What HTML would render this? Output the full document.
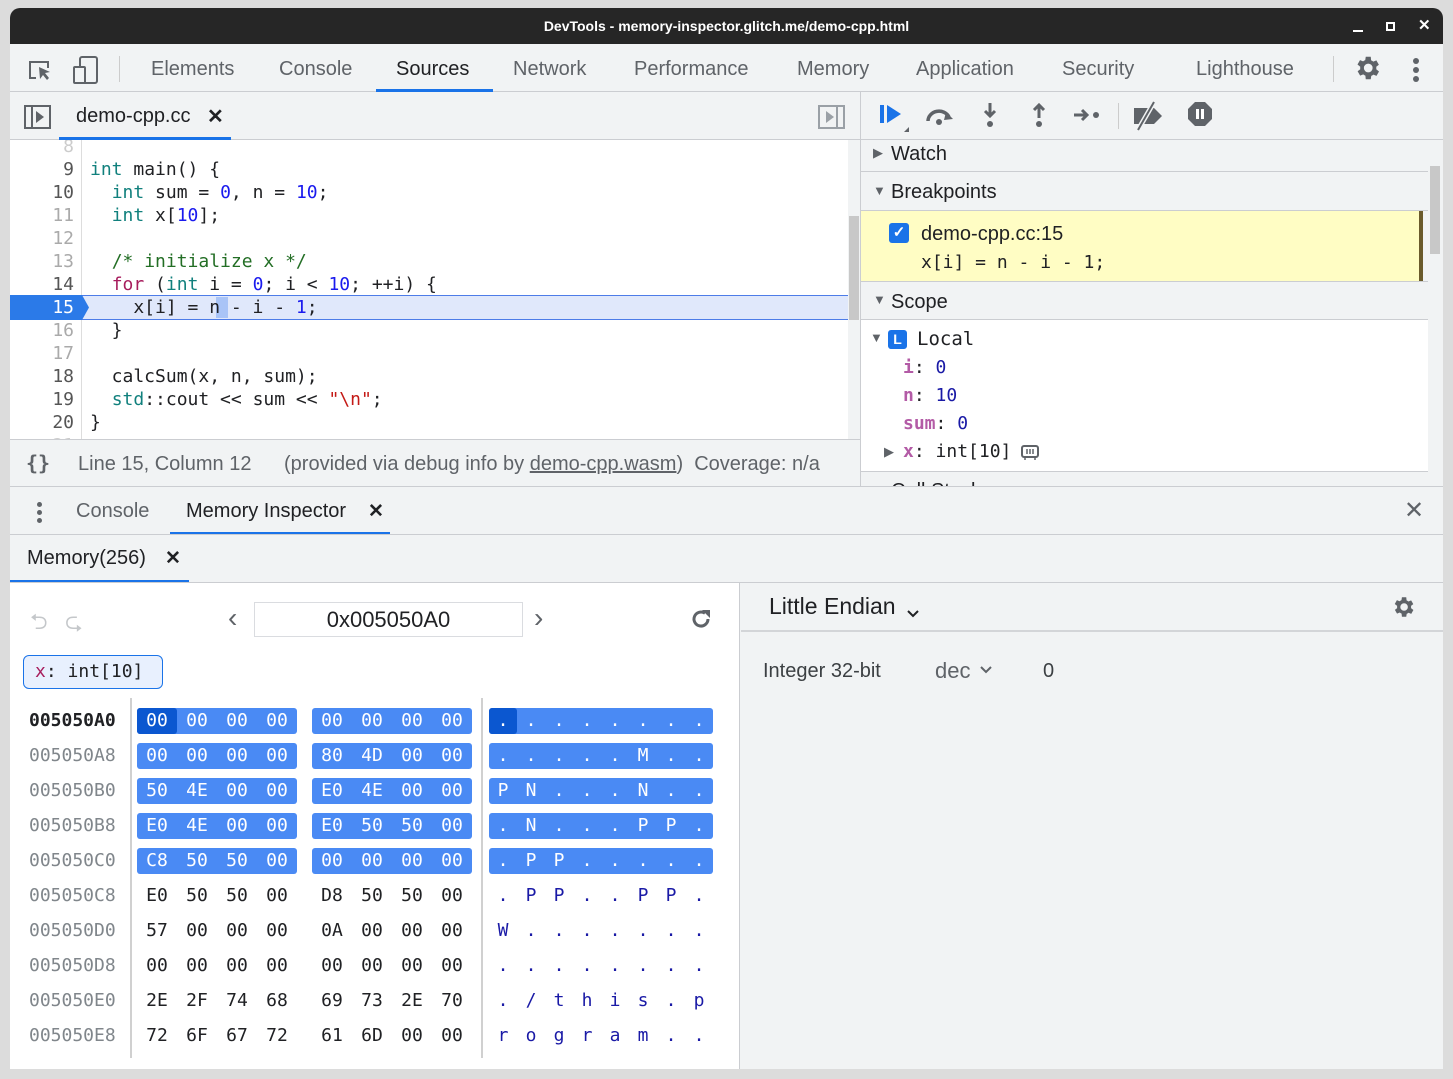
<!DOCTYPE html>
<html><head><meta charset="utf-8"><style>
*{box-sizing:border-box;margin:0;padding:0}
body{width:1453px;height:1079px;background:#dcdcdc;position:relative;overflow:hidden;font-family:"Liberation Sans",sans-serif;color:#202124}
.a{position:absolute;white-space:nowrap}
.mono{font-family:"DejaVu Sans Mono","Liberation Mono",monospace}
#win{position:absolute;left:10px;top:8px;width:1433px;height:1061px;background:#f1f3f4;border-radius:10px 10px 0 0;overflow:hidden}
.tab{font-size:20px;color:#5f6368;top:50px}
.code div{height:23px;line-height:23px;font-size:18px}
.code span[style*="margin-left"]{white-space:pre}
.ln{position:absolute;left:0;width:64px;text-align:right;color:#aaa;font-size:18px}
.kw{color:#11807d}.nm{color:#1a1aee}.cm{color:#236e25}.fr{color:#a71d5d}.st{color:#c41a16}
.row{position:absolute;left:0;height:26px;font-size:18px;line-height:26px}
.addr{position:absolute;left:19px;color:#80868b}
.g{position:absolute;height:26px;border-radius:3px;display:flex}
.g span{width:40px;text-align:center}
.as{position:absolute;left:479px;height:26px;border-radius:3px;display:flex}
.as span{width:28px;text-align:center;color:#1a1aa6}
.hl{background:#4a8af4;color:#fff}
.hl span{color:#fff!important}
.sec{font-size:20px;color:#202124}
</style></head><body>
<div id="win">
<div class="a" style="left:0;top:0;width:1433px;height:36px;background:#262626"></div>
<div class="a" style="left:0;top:10px;width:1433px;text-align:center;color:#fff;font-size:14px;font-weight:bold">DevTools - memory-inspector.glitch.me/demo-cpp.html</div>
<div class="a" style="left:1343px;top:22px;width:10px;height:2px;background:#fff"></div>
<div class="a" style="left:1376px;top:14px;width:9px;height:9px;border:2px solid #fff"></div>
<div class="a" style="left:1408px;top:8px;color:#fff;font-size:15px;font-weight:bold">✕</div>
<div class="a" style="left:0;top:83px;width:1433px;height:1px;background:#cbcdd1"></div>
<svg class="a" style="left:16px;top:48px" width="28" height="28" viewBox="0 0 28 28"><path d="M10 22H4V6h18v6" fill="none" stroke="#5f6368" stroke-width="2"/><path d="M13 11l11 5-5 1 4 5-2 2-4-5-3 4z" fill="#5f6368"/></svg>
<svg class="a" style="left:62px;top:46px" width="28" height="32" viewBox="0 0 28 32"><rect x="8" y="3" width="17" height="26" rx="2" fill="none" stroke="#5f6368" stroke-width="2"/><rect x="2" y="13" width="11" height="16" rx="1" fill="#f1f3f4" stroke="#5f6368" stroke-width="2"/></svg>
<div class="a" style="left:109px;top:48px;width:1px;height:26px;background:#ccc"></div>
<div class="a tab" style="left:141px">Elements</div>
<div class="a tab" style="left:269px">Console</div>
<div class="a tab" style="left:386px;color:#202124">Sources</div>
<div class="a" style="left:366px;top:81px;width:117px;height:3px;background:#1a73e8"></div>
<div class="a tab" style="left:503px">Network</div>
<div class="a tab" style="left:624px">Performance</div>
<div class="a tab" style="left:787px">Memory</div>
<div class="a tab" style="left:906px">Application</div>
<div class="a tab" style="left:1052px">Security</div>
<div class="a tab" style="left:1186px">Lighthouse</div>
<div class="a" style="left:1323px;top:48px;width:1px;height:26px;background:#ccc"></div>
<svg class="a" style="left:1342px;top:45px" width="30" height="30" viewBox="0 0 24 24"><path fill="#5f6368" d="M19.4 13a7.5 7.5 0 000-2l2.1-1.6-2-3.5-2.5 1a7 7 0 00-1.7-1L15 3h-4l-.4 2.7a7 7 0 00-1.7 1l-2.5-1-2 3.5L6.6 11a7.5 7.5 0 000 2l-2.1 1.6 2 3.5 2.5-1a7 7 0 001.7 1L11 21h4l.4-2.7a7 7 0 001.7-1l2.5 1 2-3.5zM13 15.5A3.5 3.5 0 1113 8.5a3.5 3.5 0 010 7z"/></svg>
<div class="a" style="left:1403px;top:50px;width:6px;height:6px;border-radius:3px;background:#5f6368;box-shadow:0 9px 0 #5f6368,0 18px 0 #5f6368"></div>
<div class="a" style="left:0;top:131px;width:1433px;height:1px;background:#cbcdd1"></div>
<svg class="a" style="left:14px;top:96px" width="28" height="26" viewBox="0 0 28 26"><rect x="1" y="2" width="25" height="22" fill="none" stroke="#5f6368" stroke-width="2"/><path d="M8 2v22" stroke="#5f6368" stroke-width="2"/><path d="M12 7l8 6-8 6z" fill="#5f6368"/></svg>
<div class="a" style="left:66px;top:97px;font-size:20px">demo-cpp.cc</div>
<div class="a" style="left:197px;top:96px;font-size:20px;font-weight:bold">✕</div>
<div class="a" style="left:49px;top:129px;width:172px;height:3px;background:#1a73e8"></div>
<svg class="a" style="left:808px;top:96px" width="28" height="26" viewBox="0 0 28 26"><rect x="1" y="2" width="25" height="22" fill="none" stroke="#9aa0a6" stroke-width="2"/><path d="M19 2v22" stroke="#9aa0a6" stroke-width="2"/><path d="M8 7l8 6-8 6z" fill="#9aa0a6"/></svg>
<div class="a" style="left:850px;top:84px;width:1px;height:395px;background:#cbcdd1"></div>
<svg class="a" style="left:868px;top:94px" width="34" height="30" viewBox="0 0 34 30"><rect x="2" y="3" width="4" height="18" fill="#1a73e8"/><path d="M9 3l14 9-14 9z" fill="#1a73e8"/><path d="M31 25v6h-6z" fill="#5f6368"/></svg>
<svg class="a" style="left:914px;top:96px" width="34" height="24" viewBox="0 0 34 24"><path d="M4 17a11 10 0 0121-4" fill="none" stroke="#5f6368" stroke-width="3.5"/><path d="M22 8l7 7-9 1z" fill="#5f6368"/><circle cx="15" cy="18" r="3" fill="#5f6368"/></svg>
<svg class="a" style="left:968px;top:92px" width="24" height="30" viewBox="0 0 24 30"><path d="M12 3v12M7 11l5 5 5-5" stroke="#5f6368" stroke-width="3" fill="none"/><circle cx="12" cy="24" r="3" fill="#5f6368"/></svg>
<svg class="a" style="left:1017px;top:92px" width="24" height="30" viewBox="0 0 24 30"><path d="M12 18V6M7 10l5-5 5 5" stroke="#5f6368" stroke-width="3" fill="none"/><circle cx="12" cy="24" r="3" fill="#5f6368"/></svg>
<svg class="a" style="left:1062px;top:95px" width="30" height="24" viewBox="0 0 30 24"><path d="M2 12h12M10 7l5 5-5 5" stroke="#5f6368" stroke-width="3" fill="none"/><circle cx="24" cy="12" r="3" fill="#5f6368"/></svg>
<div class="a" style="left:1108px;top:95px;width:1px;height:26px;background:#ccc"></div>
<svg class="a" style="left:1122px;top:92px" width="34" height="34" viewBox="0 0 34 34"><path d="M2 8h20l8 8-8 8H2z" fill="#5f6368"/><path d="M6 30L22 2" stroke="#f1f3f4" stroke-width="5"/><path d="M6 30L22 2" stroke="#5f6368" stroke-width="2"/></svg>
<svg class="a" style="left:1176px;top:92px" width="28" height="28" viewBox="0 0 28 28"><path d="M9 2h10l7 7v10l-7 7H9l-7-7V9z" fill="#5f6368"/><rect x="10" y="9" width="3" height="10" fill="#fff"/><rect x="15" y="9" width="3" height="10" fill="#fff"/></svg>
<div class="a" style="left:0;top:132px;width:838px;height:299px;background:#fff;overflow:hidden">
<div class="a" style="left:71px;top:0;width:1px;height:299px;background:#ddd"></div>
<div class="a" style="left:0;top:155px;width:838px;height:25px;background:#e0e8fb;border-top:1px solid #4d7ce8;border-bottom:1px solid #4d7ce8"></div>
<svg class="a" style="left:0;top:155px" width="80" height="25"><path d="M0 0h72l7 12.5-7 12.5H0z" fill="#2b7ae8"/></svg>
<div class="a" style="left:206px;top:157px;width:12px;height:21px;background:#a9c4f7"></div>
<div class="a mono code" style="left:0;top:-5px;width:838px">
<div><span class="ln" style="color:#ccc">8</span></div>
<div><span class="ln" style="color:#555">9</span><span style="margin-left:80px"><span class="kw">int</span> main() {</span></div>
<div><span class="ln" style="color:#555">10</span><span style="margin-left:80px">  <span class="kw">int</span> sum = <span class="nm">0</span>, n = <span class="nm">10</span>;</span></div>
<div><span class="ln">11</span><span style="margin-left:80px">  <span class="kw">int</span> x[<span class="nm">10</span>];</span></div>
<div><span class="ln">12</span></div>
<div><span class="ln">13</span><span style="margin-left:80px">  <span class="cm">/* initialize x */</span></span></div>
<div><span class="ln" style="color:#555">14</span><span style="margin-left:80px">  <span class="fr">for</span> (<span class="kw">int</span> i = <span class="nm">0</span>; i &lt; <span class="nm">10</span>; ++i) {</span></div>
<div><span class="ln" style="color:#fff">15</span><span style="margin-left:80px">    x[i] = n - i - <span class="nm">1</span>;</span></div>
<div><span class="ln">16</span><span style="margin-left:80px">  }</span></div>
<div><span class="ln">17</span></div>
<div><span class="ln" style="color:#555">18</span><span style="margin-left:80px">  calcSum(x, n, sum);</span></div>
<div><span class="ln" style="color:#555">19</span><span style="margin-left:80px">  <span class="kw">std</span>::cout &lt;&lt; sum &lt;&lt; <span class="st">"\n"</span>;</span></div>
<div><span class="ln" style="color:#555">20</span><span style="margin-left:80px">}</span></div>
<div><span class="ln" style="color:#ccc">21</span></div>
</div>
</div>
<div class="a" style="left:838px;top:132px;width:12px;height:299px;background:#f1f3f4"></div>
<div class="a" style="left:839px;top:208px;width:10px;height:104px;background:#c8c8c8"></div>
<div class="a" style="left:0;top:431px;width:850px;height:1px;background:#cbcdd1"></div>
<div class="a mono" style="left:16px;top:443px;font-size:20px;font-weight:bold;color:#5f6368">{}</div>
<div class="a" style="left:68px;top:445px;font-size:20px;color:#5f6368">Line 15, Column 12</div>
<div class="a" style="left:274px;top:445px;font-size:20px;color:#5f6368">(provided via debug info by <u>demo-cpp.wasm</u>)&nbsp; Coverage: n/a</div>
<div class="a" style="left:851px;top:132px;width:567px;height:347px;overflow:hidden">
 <div class="a" style="left:0;top:0;width:567px;height:32px;border-bottom:1px solid #cbcdd1"></div>
 <div class="a sec" style="left:12px;top:5px;font-size:13px;color:#5f6368">▶</div>
 <div class="a sec" style="left:30px;top:3px">Watch</div>
 <div class="a sec" style="left:12px;top:43px;font-size:13px;color:#5f6368">▼</div>
 <div class="a sec" style="left:30px;top:41px">Breakpoints</div>
 <div class="a" style="left:0;top:70px;width:567px;height:1px;background:#cbcdd1"></div>
 <div class="a" style="left:0;top:71px;width:562px;height:70px;background:#fffdc4;border-right:4px solid #6a5a2b"></div>
 <div class="a" style="left:28px;top:83px;width:20px;height:20px;border-radius:3px;background:#1a73e8;color:#fff;font-size:15px;text-align:center;line-height:20px;font-weight:bold">✓</div>
 <div class="a sec" style="left:60px;top:83px">demo-cpp.cc:15</div>
 <div class="a mono" style="left:60px;top:112px;font-size:18px">x[i] = n - i - 1;</div>
 <div class="a" style="left:0;top:141px;width:567px;height:1px;background:#cbcdd1"></div>
 <div class="a sec" style="left:12px;top:152px;font-size:13px;color:#5f6368">▼</div>
 <div class="a sec" style="left:30px;top:151px">Scope</div>
 <div class="a" style="left:0;top:179px;width:567px;height:153px;background:#fff;border-top:1px solid #cbcdd1;border-bottom:1px solid #cbcdd1"></div>
 <div class="a" style="left:9px;top:190px;font-size:13px;color:#5f6368">▼</div>
 <div class="a" style="left:27px;top:190px;width:19px;height:19px;border-radius:3px;background:#1a73e8;color:#fff;font-size:14px;font-weight:bold;text-align:center;line-height:19px">L</div>
 <div class="a mono" style="left:56px;top:188px;font-size:19px">Local</div>
 <div class="a mono" style="left:42px;top:217px;font-size:18px"><span style="color:#b35ba6;font-weight:bold">i</span>: <span style="color:#1a1aa6">0</span></div>
 <div class="a mono" style="left:42px;top:245px;font-size:18px"><span style="color:#b35ba6;font-weight:bold">n</span>: <span style="color:#1a1aa6">10</span></div>
 <div class="a mono" style="left:42px;top:273px;font-size:18px"><span style="color:#b35ba6;font-weight:bold">sum</span>: <span style="color:#1a1aa6">0</span></div>
 <div class="a" style="left:23px;top:304px;font-size:13px;color:#5f6368">▶</div>
 <div class="a mono" style="left:42px;top:301px;font-size:18px"><span style="color:#b35ba6;font-weight:bold">x</span>: int[10]</div>
 <svg class="a" style="left:159px;top:303px" width="20" height="18" viewBox="0 0 20 18"><rect x="2" y="3" width="16" height="11" rx="2" fill="none" stroke="#5f6368" stroke-width="2"/><path d="M7 6v5M10 6v5M13 6v5M5 14v3M15 14v3" stroke="#5f6368" stroke-width="1.5"/></svg>
 <div class="a sec" style="left:12px;top:346px;font-size:13px;color:#5f6368">▼</div>
 <div class="a sec" style="left:30px;top:340px">Call Stack</div>
</div>
<div class="a" style="left:1418px;top:132px;width:15px;height:347px;background:#f1f3f4"></div>
<div class="a" style="left:1420px;top:158px;width:10px;height:88px;background:#c8c8c8"></div>
<div class="a" style="left:0;top:478px;width:1433px;height:1px;background:#cbcdd1"></div>
<div class="a" style="left:27px;top:494px;width:5px;height:5px;border-radius:3px;background:#5f6368;box-shadow:0 8px 0 #5f6368,0 16px 0 #5f6368"></div>
<div class="a tab" style="left:66px;top:492px">Console</div>
<div class="a tab" style="left:176px;top:492px;color:#202124">Memory Inspector</div>
<div class="a" style="left:358px;top:492px;font-size:19px;font-weight:bold">✕</div>
<div class="a" style="left:160px;top:524px;width:220px;height:3px;background:#1a73e8"></div>
<div class="a" style="left:1394px;top:488px;font-size:24px;color:#5f6368">✕</div>
<div class="a" style="left:0;top:526px;width:1433px;height:1px;background:#cbcdd1"></div>
<div class="a" style="left:17px;top:539px;font-size:20px">Memory(256)</div>
<div class="a" style="left:155px;top:539px;font-size:19px;font-weight:bold">✕</div>
<div class="a" style="left:0;top:572px;width:179px;height:3px;background:#1a73e8"></div>
<div class="a" style="left:0;top:574px;width:1433px;height:1px;background:#cbcdd1"></div>
<div class="a" style="left:0;top:575px;width:730px;height:486px;background:#fff;border-right:1px solid #cbcdd1">
 <div class="a" style="left:20px;top:22px;font-size:22px;color:#c4c7ca">⮌</div>
 <div class="a" style="left:55px;top:22px;font-size:22px;color:#c4c7ca">⮎</div>
 <div class="a" style="left:218px;top:19px;font-size:28px;color:#5f6368">‹</div>
 <div class="a" style="left:244px;top:19px;width:269px;height:35px;border:1px solid #dadce0;text-align:center;font-size:22px;line-height:33px">0x005050A0</div>
 <div class="a" style="left:524px;top:19px;font-size:28px;color:#5f6368">›</div>
 <svg class="a" style="left:679px;top:24px" width="24" height="24" viewBox="0 0 24 24"><path d="M19 12a7 7 0 11-3-5.7" fill="none" stroke="#5f6368" stroke-width="3"/><path d="M13 3h8v8z" fill="#5f6368"/></svg>
 <div class="a mono" style="left:13px;top:72px;width:140px;height:34px;border:1px solid #1a73e8;border-radius:6px;background:#e8f0fe;font-size:18px;line-height:32px;padding-left:11px"><span style="color:#a71d5d">x</span>: int[10]</div>
 <div class="a" style="left:120px;top:115px;width:2px;height:360px;background:#d0d0d0"></div>
 <div class="a" style="left:471px;top:115px;width:2px;height:360px;background:#d0d0d0"></div>
 <div class="mono" style="position:absolute;left:0;top:125px">
  <div class="row" style="top:0"><span class="addr" style="color:#202124;font-weight:bold">005050A0</span><div class="g hl" style="left:127px"><span style="background:#0b57d0;border-radius:3px">00</span><span>00</span><span>00</span><span>00</span></div><div class="g hl" style="left:302px"><span>00</span><span>00</span><span>00</span><span>00</span></div><div class="as hl"><span style="background:#0b57d0;border-radius:3px">.</span><span>.</span><span>.</span><span>.</span><span>.</span><span>.</span><span>.</span><span>.</span></div></div>
  <div class="row" style="top:35px"><span class="addr">005050A8</span><div class="g hl" style="left:127px"><span>00</span><span>00</span><span>00</span><span>00</span></div><div class="g hl" style="left:302px"><span>80</span><span>4D</span><span>00</span><span>00</span></div><div class="as hl"><span>.</span><span>.</span><span>.</span><span>.</span><span>.</span><span>M</span><span>.</span><span>.</span></div></div>
  <div class="row" style="top:70px"><span class="addr">005050B0</span><div class="g hl" style="left:127px"><span>50</span><span>4E</span><span>00</span><span>00</span></div><div class="g hl" style="left:302px"><span>E0</span><span>4E</span><span>00</span><span>00</span></div><div class="as hl"><span>P</span><span>N</span><span>.</span><span>.</span><span>.</span><span>N</span><span>.</span><span>.</span></div></div>
  <div class="row" style="top:105px"><span class="addr">005050B8</span><div class="g hl" style="left:127px"><span>E0</span><span>4E</span><span>00</span><span>00</span></div><div class="g hl" style="left:302px"><span>E0</span><span>50</span><span>50</span><span>00</span></div><div class="as hl"><span>.</span><span>N</span><span>.</span><span>.</span><span>.</span><span>P</span><span>P</span><span>.</span></div></div>
  <div class="row" style="top:140px"><span class="addr">005050C0</span><div class="g hl" style="left:127px"><span>C8</span><span>50</span><span>50</span><span>00</span></div><div class="g hl" style="left:302px"><span>00</span><span>00</span><span>00</span><span>00</span></div><div class="as hl"><span>.</span><span>P</span><span>P</span><span>.</span><span>.</span><span>.</span><span>.</span><span>.</span></div></div>
  <div class="row" style="top:175px"><span class="addr">005050C8</span><div class="g" style="left:127px"><span>E0</span><span>50</span><span>50</span><span>00</span></div><div class="g" style="left:302px"><span>D8</span><span>50</span><span>50</span><span>00</span></div><div class="as"><span>.</span><span>P</span><span>P</span><span>.</span><span>.</span><span>P</span><span>P</span><span>.</span></div></div>
  <div class="row" style="top:210px"><span class="addr">005050D0</span><div class="g" style="left:127px"><span>57</span><span>00</span><span>00</span><span>00</span></div><div class="g" style="left:302px"><span>0A</span><span>00</span><span>00</span><span>00</span></div><div class="as"><span>W</span><span>.</span><span>.</span><span>.</span><span>.</span><span>.</span><span>.</span><span>.</span></div></div>
  <div class="row" style="top:245px"><span class="addr">005050D8</span><div class="g" style="left:127px"><span>00</span><span>00</span><span>00</span><span>00</span></div><div class="g" style="left:302px"><span>00</span><span>00</span><span>00</span><span>00</span></div><div class="as"><span>.</span><span>.</span><span>.</span><span>.</span><span>.</span><span>.</span><span>.</span><span>.</span></div></div>
  <div class="row" style="top:280px"><span class="addr">005050E0</span><div class="g" style="left:127px"><span>2E</span><span>2F</span><span>74</span><span>68</span></div><div class="g" style="left:302px"><span>69</span><span>73</span><span>2E</span><span>70</span></div><div class="as"><span>.</span><span>/</span><span>t</span><span>h</span><span>i</span><span>s</span><span>.</span><span>p</span></div></div>
  <div class="row" style="top:315px"><span class="addr">005050E8</span><div class="g" style="left:127px"><span>72</span><span>6F</span><span>67</span><span>72</span></div><div class="g" style="left:302px"><span>61</span><span>6D</span><span>00</span><span>00</span></div><div class="as"><span>r</span><span>o</span><span>g</span><span>r</span><span>a</span><span>m</span><span>.</span><span>.</span></div></div>
 </div>
</div>
<div class="a" style="left:731px;top:622px;width:702px;height:2px;background:#d3d5d8"></div>
<div class="a" style="left:759px;top:585px;font-size:23px;color:#202124">Little Endian</div>
<svg class="a" style="left:896px;top:601px" width="14" height="10" viewBox="0 0 14 10"><path d="M2 2l5 5 5-5" fill="none" stroke="#202124" stroke-width="2"/></svg>
<svg class="a" style="left:1380px;top:586px" width="26" height="26" viewBox="0 0 24 24"><path fill="#5f6368" d="M19.4 13a7.5 7.5 0 000-2l2.1-1.6-2-3.5-2.5 1a7 7 0 00-1.7-1L15 3h-4l-.4 2.7a7 7 0 00-1.7 1l-2.5-1-2 3.5L6.6 11a7.5 7.5 0 000 2l-2.1 1.6 2 3.5 2.5-1a7 7 0 001.7 1L11 21h4l.4-2.7a7 7 0 001.7-1l2.5 1 2-3.5zM13 15.5A3.5 3.5 0 1113 8.5a3.5 3.5 0 010 7z"/></svg>
<div class="a" style="left:753px;top:652px;font-size:20px;color:#3c4043">Integer 32-bit</div>
<div class="a" style="left:925px;top:650px;font-size:22px;color:#5f6368">dec</div>
<svg class="a" style="left:969px;top:657px" width="14" height="10" viewBox="0 0 14 10"><path d="M2 2l5 5 5-5" fill="none" stroke="#5f6368" stroke-width="2"/></svg>
<div class="a" style="left:1033px;top:652px;font-size:20px;color:#3c4043">0</div>
</div>
</body></html>
